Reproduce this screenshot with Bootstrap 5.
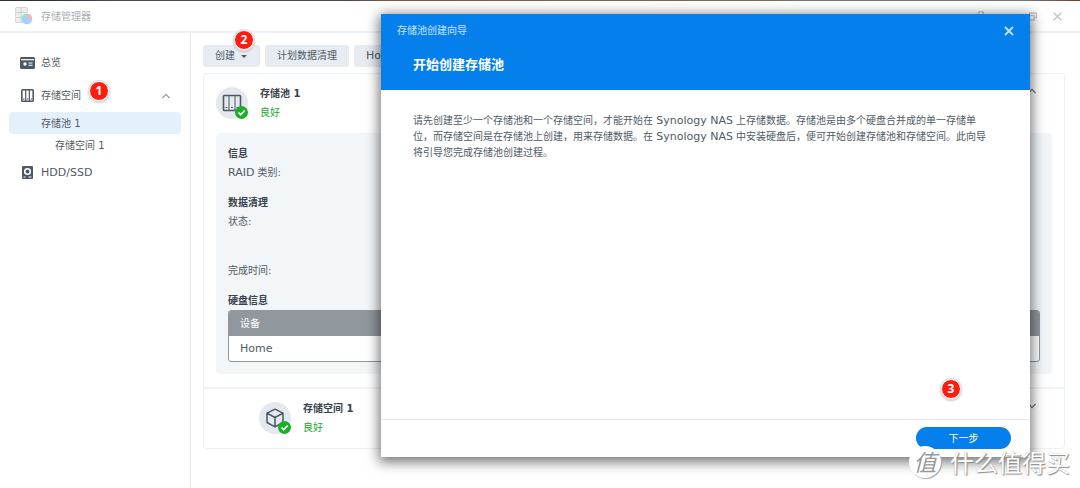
<!DOCTYPE html>
<html lang="zh-CN">
<head>
<meta charset="utf-8">
<meta name="viewport" content="width=device-width, initial-scale=1">
<title>存储管理器</title>
<link href="https://cdn.jsdelivr.net/npm/bootstrap@5.3.0/dist/css/bootstrap.min.css" rel="stylesheet">
<script src="https://cdn.jsdelivr.net/npm/bootstrap@5.3.0/dist/js/bootstrap.bundle.min.js" defer></script>
<style>
  body { font: 10px/19px "DejaVu Sans", "Noto Sans CJK SC", sans-serif; color: #505a64; min-height: 100vh; background: #fff; }
  [lang="en"] { font-size: 11px; }
  a { color: inherit; text-decoration: none; }
  strong { color: #39434d; }
  svg { display: block; flex: none; }
  .desktop-edge { height: 1px; background: linear-gradient(90deg, #3a2d38 0 5%, #4e4653 10% 32%, #7a5a48 36%, #7d6c58 72%, #777 74% 95%, #7a3a28); }
  .titlebar { height: 32px; padding: 0 14px; border-bottom: 2px solid #eff3f7; color: #a9aeb3; }
  .titlebar button { color: #c3c7ca; }
  .app-name { margin-left: 7px; }
  .icon-btn { padding: 0; border: 0; background: none; line-height: 0; }
  .side { width: 191px; flex: none; padding: 13px 9px; border-right: 1px solid #e3ebf1; }
  .side a { height: 33px; border-radius: 4px; padding: 0 11px; gap: 6px; }
  .side a.pool, .side a.volume { height: 22px; padding-left: 32px; }
  .side a.volume { padding-left: 46px; }
  .side a.pool.active { background: #e4f1fd; }
  .pane { padding: 12px 15px 24px 12px; min-width: 0; }
  .tools { gap: 5px; }
  .tool { height: 22px; padding: 0 12px; border: 0; border-radius: 3px; background: #e7ecf3; color: #505a64; font-size: 10px; line-height: 22px; }
  .caret { border: 3px solid transparent; border-top-color: #505a64; border-bottom: 0; margin: 1px 1px 0 6px; }
  .panel { border: 1px solid #ebf0f5; border-radius: 4px; margin-top: 6px; }
  .row-head { padding: 10px 12px 11px; gap: 12px; }
  .sub-head { padding-left: 55px; border-top: 2px solid #eff4f8; }
  .disc { width: 32px; height: 32px; border-radius: 50%; background: #e3e9ef; }
  .tick { right: 0; bottom: 0; }
  .good { color: #16a82a; }
  .details { background: #f2f6f9; border-radius: 4px; margin: 0 12px 13px; padding: 11px 12px 12px; }
  .group { margin-bottom: 11px; }
  .later { margin-top: 30px; }
  .disks { border: 1px solid #90979d; border-radius: 3px; background: #fff; overflow: hidden; }
  .disks th, .disks td { height: 25px; padding: 0 11px; text-align: left; color: #505a64; font-weight: 400; }
  .disks th { background: #90979d; color: #fff; }
  .wizard { left: 381px; right: 50px; top: 14px; height: 443px; background: #fff; box-shadow: 0 3px 12px 2px rgba(0,0,0,.55); z-index: 5; }
  .wizard header { background: #057feb; color: #fff; height: 76px; padding: 7px 16px; }
  .wizard .caption-bar { color: #cbe6ff; }
  .wizard h1 { font-size: 13px; line-height: 20px; font-weight: 700; margin: 15px 16px 0; }
  .wizard p { margin: 0; padding: 23px 32px; line-height: 16px; }
  .wizard footer { border-top: 1px solid #e6eaee; padding: 7px 19px 8px; }
  .next { width: 95px; height: 22px; border: 0; border-radius: 11px; background: #057feb; color: #fff; font-size: 10px; line-height: 22px; }
  .step { width: 20px; height: 20px; border-radius: 50%; background: #fd1d10; border: 1px solid #fff; box-shadow: 0 0 0 1px #e3e3e3, 0 1px 2px 1px rgba(0,0,0,.2); color: #fff; font: 700 12px/18px "Open Sans", sans-serif; text-align: center; z-index: 6; }
  .step-1 { left: 80px; top: 2px; }
  .step-2 { left: 31px; top: -15px; }
  .step-3 { right: 69px; bottom: 58px; }
  .stamp { right: 10px; bottom: 8px; z-index: 7; gap: 9px; color: #fff; font: 24px/36px "Noto Sans CJK SC", sans-serif; text-shadow: 1px 1px 1px #888, 0 0 1px #aaa; }
  .seal { width: 32px; height: 32px; border-radius: 50%; background: #fff; color: #999; line-height: 30px; text-align: center; text-shadow: none; box-shadow: 1px 1px 1px #aaa; }
  .seal i { font-size: 23px; }
</style>
</head>
<body class="position-relative d-flex flex-column">
<div class="desktop-edge"></div>
<header class="titlebar d-flex align-items-center">
  <svg width="20" height="20" viewBox="0 0 20 20"><g fill="#ededed" stroke="#ccc" stroke-width=".8"><rect x="1.500" y="1.500" width="12" height="5" rx="1"/><rect x="1.500" y="6.500" width="12" height="5" rx="1"/><rect x="1.500" y="11.500" width="12" height="5" rx="1"/><path d="M7 1.500v15"/></g><circle cx="13" cy="13" r="5.300" fill="#aaccff"/><path d="M13 13V7.700A5.300 5.300 0 0 0 8 14.500z" fill="#90dcf0"/><path d="M13 13V7.700a5.300 5.300 0 0 1 5 3.700z" fill="#ffb4a5"/></svg>
  <span class="app-name">存储管理器</span>
  <div class="ms-auto d-flex gap-3 pe-1">
    <button class="icon-btn" aria-label="帮助"><svg width="10" height="10" viewBox="0 0 10 10" fill="none" stroke="currentColor" stroke-width="1.500"><path d="M2.500 3a2.500 2.500 0 1 1 3.500 2q-1 .5-1 2M5 8.500v1"/></svg></button>
    <button class="icon-btn" aria-label="最小化"><svg width="9" height="9" viewBox="0 0 9 9" stroke="currentColor" stroke-width="1.500"><path d="M0 7h9"/></svg></button>
    <button class="icon-btn" aria-label="还原"><svg width="10" height="9" viewBox="0 0 10 9" fill="none" stroke="currentColor" stroke-width="1.300"><path d="M2.500 3V1h7v4.500H8M.7 3.500h6.500V8H.7z"/></svg></button>
    <button class="icon-btn" aria-label="关闭"><svg width="9" height="9" viewBox="0 0 9 9" stroke="currentColor" stroke-width="1.500"><path d="m.7.700 7.600 7.600m0-7.600L.7 8.300"/></svg></button>
  </div>
</header>
<div class="d-flex flex-grow-1">
  <nav class="side">
    <a href="#" class="d-flex align-items-center"><svg width="15" height="12" viewBox="0 0 15 12"><rect width="15" height="12" rx="1.500" fill="#4c5864"/><path d="M1 2.700h13" stroke="#fff" stroke-width="1.200"/><circle cx="5" cy="7" r="1.700" fill="#fff"/><path d="M8.500 6h4M8.500 8.300h4" stroke="#fff" stroke-width="1.100"/></svg>总览</a>
    <a href="#" class="d-flex align-items-center position-relative"><svg width="15" height="13" viewBox="0 0 15 13"><rect x="1.800" y=".8" width="11.400" height="11.400" rx=".8" fill="#fff" stroke="#4c5864" stroke-width="1.600"/><path d="M5.700 1v11M9.300 1v11" stroke="#4c5864" stroke-width="1.200"/><path d="M3 10h1.500M6.800 10h1.500M10.500 10H12" stroke="#4c5864"/></svg>存储空间<span class="step step-1 position-absolute">1</span>
      <svg class="ms-auto" width="8" height="6" viewBox="0 0 8 6" fill="none" stroke="#949ba1" stroke-width="1.200"><path d="M.5 5 4 1.300 7.500 5"/></svg></a>
    <a href="#" class="pool active d-flex align-items-center">存储池 1</a>
    <a href="#" class="volume d-flex align-items-center">存储空间 1</a>
    <a href="#" class="d-flex align-items-center"><svg width="15" height="13" viewBox="0 0 15 13"><rect x="2" width="11" height="13" rx="1" fill="#4c5864"/><circle cx="7.500" cy="5.500" r="2.800" stroke="#fff" stroke-width="1.600" fill="#4c5864"/><path d="M3.500 11h2M8.500 11h3" stroke="#fff"/></svg><span lang="en">HDD/SSD</span></a>
  </nav>
  <main class="pane flex-grow-1">
    <div class="tools d-flex">
      <button class="tool position-relative d-flex align-items-center">创建<span class="caret"></span><span class="step step-2 position-absolute">2</span></button>
      <button class="tool">计划数据清理</button>
      <button class="tool"><span lang="en">Hot Spare</span></button>
    </div>
    <section class="panel">
      <div class="row-head d-flex align-items-center">
        <div class="disc position-relative d-flex align-items-center justify-content-center">
          <svg width="20" height="18" viewBox="0 0 20 18" fill="none" stroke="#4c5864"><rect x="1.500" y="1.500" width="17" height="15" rx=".8" stroke-width="1.600"/><path d="M7 2v14M13 2v14"/><path d="M3.500 13.500h2M9 13.500h2M14.500 13.500h2" stroke-width="1.200"/></svg>
          <svg class="tick position-absolute" width="13" height="13" viewBox="0 0 13 13"><circle cx="6.500" cy="6.500" r="6.500" fill="#16b125"/><path d="m3.500 6.500 2.200 2.200 4-4.200" fill="none" stroke="#fff" stroke-width="1.700"/></svg>
        </div>
        <div><strong class="d-block">存储池 1</strong><span class="good d-block">良好</span></div>
        <svg class="ms-auto align-self-start mt-1 me-3" width="8" height="6" viewBox="0 0 8 6" fill="none" stroke="#70777d" stroke-width="1.200"><path d="M.5 5 4 1.300 7.500 5"/></svg>
      </div>
      <div class="details">
        <div class="group"><strong class="d-block">信息</strong><span lang="en">RAID</span> 类别:</div>
        <div class="group"><strong class="d-block">数据清理</strong>状态:<div class="later">完成时间:</div></div>
        <strong class="d-block">硬盘信息</strong>
        <div class="disks"><table class="w-100"><thead><tr><th>设备</th></tr></thead><tbody><tr><td><span lang="en">Home</span></td></tr></tbody></table></div>
      </div>
      <div class="row-head sub-head d-flex align-items-center">
        <div class="disc position-relative d-flex align-items-center justify-content-center">
          <svg width="20" height="20" viewBox="0 0 20 20" fill="none" stroke="#4c5864" stroke-width="1.500" stroke-linejoin="round"><path d="m10 1.200 8 4v9.300l-8 4.300-8-4.300V5.200zM2 5.200l8 4.300 8-4.300M10 9.500v9"/></svg>
          <svg class="tick position-absolute" width="13" height="13" viewBox="0 0 13 13"><circle cx="6.500" cy="6.500" r="6.500" fill="#16b125"/><path d="m3.500 6.500 2.200 2.200 4-4.200" fill="none" stroke="#fff" stroke-width="1.700"/></svg>
        </div>
        <div><strong class="d-block">存储空间 1</strong><span class="good d-block">良好</span></div>
        <svg class="ms-auto align-self-start mt-1 me-3" width="8" height="6" viewBox="0 0 8 6" fill="none" stroke="#70777d" stroke-width="1.200"><path d="M.5 1 4 4.700 7.500 1"/></svg>
      </div>
    </section>
  </main>
</div>
<div class="wizard position-absolute d-flex flex-column" role="dialog" aria-labelledby="wizard-title">
  <header>
    <div class="caption-bar d-flex align-items-center">存储池创建向导<button class="icon-btn ms-auto text-white opacity-75" aria-label="关闭"><svg width="10" height="10" viewBox="0 0 10 10" stroke="currentColor" stroke-width="1.800"><path d="m1 1 8 8m0-8L1 9"/></svg></button></div>
    <h1 id="wizard-title">开始创建存储池</h1>
  </header>
  <p>请先创建至少一个存储池和一个存储空间，才能开始在 <span lang="en">Synology NAS</span> 上存储数据。存储池是由多个硬盘合并成的单一存储单<br>位，而存储空间是在存储池上创建，用来存储数据。在 <span lang="en">Synology NAS</span> 中安装硬盘后，便可开始创建存储池和存储空间。此向导<br>将引导您完成存储池创建过程。</p>
  <footer class="mt-auto d-flex justify-content-end"><button class="next">下一步</button></footer>
  <span class="step step-3 position-absolute">3</span>
</div>
<div class="stamp position-absolute d-flex align-items-center"><span class="seal"><i>值</i></span><span>什么值得买</span></div>
</body>
</html>
